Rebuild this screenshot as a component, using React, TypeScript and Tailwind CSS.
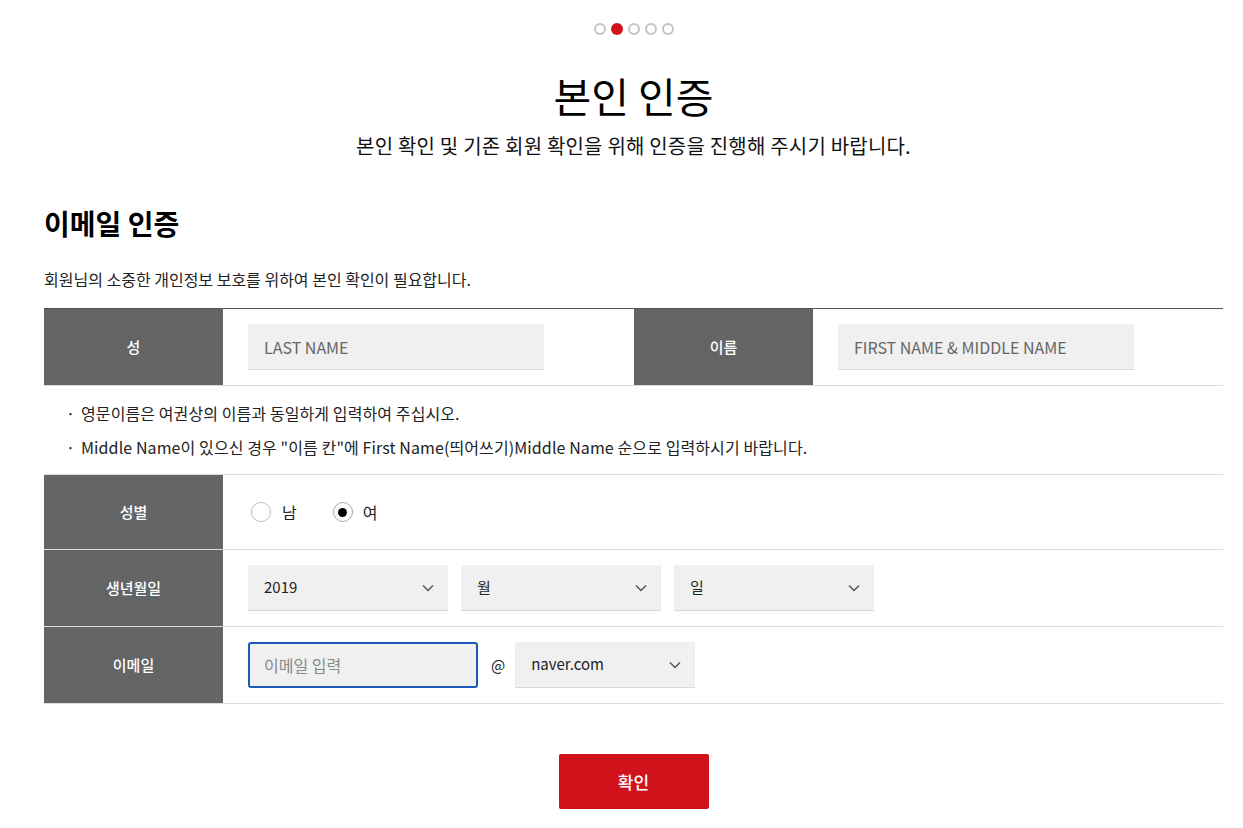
import React from "react";

const font = { fontFamily: '"Noto Sans CJK KR", "Noto Sans", sans-serif' };

function Chevron() {
  return (
    <svg width="12" height="8" viewBox="0 0 12 8" fill="none" className="shrink-0">
      <path d="M1 1.5 L6 6.5 L11 1.5" stroke="#555" strokeWidth="1.5" />
    </svg>
  );
}

function Select({ value, width }: { value: string; width: string }) {
  return (
    <div
      className={`${width} h-[46px] bg-[#f0f0f0] border-b border-[#d9d9d9] flex items-center justify-between pl-[16px] pr-[14px] text-[15px] text-[#222]`}
    >
      <span>{value}</span>
      <Chevron />
    </div>
  );
}

function Label({ children }: { children: React.ReactNode }) {
  return (
    <div className="w-[179px] shrink-0 bg-[#636466] text-white text-[15px] font-medium flex items-center justify-center">
      {children}
    </div>
  );
}

export default function App() {
  return (
    <div style={font} className="w-[1243px] min-h-[828px] bg-white pl-[44px] pr-[20px] text-[#111]">
      <div className="flex justify-center gap-[5px] pt-[23px]">
        <span className="w-[12px] h-[12px] rounded-full border-2 border-[#c4c4c4]" />
        <span className="w-[12px] h-[12px] rounded-full bg-[#d0121b]" />
        <span className="w-[12px] h-[12px] rounded-full border-2 border-[#c4c4c4]" />
        <span className="w-[12px] h-[12px] rounded-full border-2 border-[#c4c4c4]" />
        <span className="w-[12px] h-[12px] rounded-full border-2 border-[#c4c4c4]" />
      </div>
      <h1 className="mt-[35px] text-center text-[41px] leading-[50px] text-black">본인 인증</h1>
      <p className="mt-[12px] text-center text-[20px] leading-[28px] text-[#111] tracking-[0.2px]">
        본인 확인 및 기존 회원 확인을 위해 인증을 진행해 주시기 바랍니다.
      </p>
      <h2 className="mt-[45px] text-[28px] leading-[36px] font-bold text-black">이메일 인증</h2>
      <p className="mt-[27px] text-[16px] leading-[22px] text-[#222]">
        회원님의 소중한 개인정보 보호를 위하여 본인 확인이 필요합니다.
      </p>

      <div className="mt-[18px] border-t border-[#555]">
        {/* name row */}
        <div className="flex h-[77px] border-b border-[#dcdcdc]">
          <Label>성</Label>
          <div className="w-[411px] shrink-0 flex items-center pl-[25px]">
            <div className="w-[296px] h-[46px] bg-[#f0f0f0] border-b border-[#d9d9d9] flex items-center pl-[16px] text-[16px] text-[#666]">
              LAST NAME
            </div>
          </div>
          <Label>이름</Label>
          <div className="flex-1 flex items-center pl-[25px]">
            <div className="w-[296px] h-[46px] bg-[#f0f0f0] border-b border-[#d9d9d9] flex items-center pl-[16px] text-[16px] text-[#666]">
              FIRST NAME &amp; MIDDLE NAME
            </div>
          </div>
        </div>

        {/* notes */}
        <div className="h-[89px] border-b border-[#dcdcdc] pl-[22px] pt-[16px] flex flex-col gap-[12px] text-[16px] leading-[22px] text-[#222] tracking-[0.1px]">
          <div className="flex">
            <span className="w-[15px]">·</span>
            <span>영문이름은 여권상의 이름과 동일하게 입력하여 주십시오.</span>
          </div>
          <div className="flex">
            <span className="w-[15px]">·</span>
            <span>Middle Name이 있으신 경우 "이름 칸"에 First Name(띄어쓰기)Middle Name 순으로 입력하시기 바랍니다.</span>
          </div>
        </div>

        {/* gender */}
        <div className="flex h-[75px] border-b border-[#dcdcdc]">
          <Label>성별</Label>
          <div className="flex-1 flex items-center pl-[28px] text-[16px] text-[#222]">
            <span className="w-[20px] h-[20px] rounded-full border border-[#bdbdbd] bg-white" />
            <span className="ml-[11px]">남</span>
            <span className="ml-[36px] w-[20px] h-[20px] rounded-full border border-[#a8a8a8] bg-white flex items-center justify-center">
              <span className="w-[9px] h-[9px] rounded-full bg-black" />
            </span>
            <span className="ml-[10px]">여</span>
          </div>
        </div>

        {/* birth */}
        <div className="flex h-[77px] border-b border-[#dcdcdc]">
          <Label>생년월일</Label>
          <div className="flex-1 flex items-center pl-[25px] gap-[13px]">
            <Select value="2019" width="w-[200px]" />
            <Select value="월" width="w-[200px]" />
            <Select value="일" width="w-[200px]" />
          </div>
        </div>

        {/* email */}
        <div className="flex h-[77px] border-b border-[#dcdcdc]">
          <Label>이메일</Label>
          <div className="flex-1 flex items-center pl-[25px]">
            <div className="w-[230px] h-[46px] bg-[#f0f0f0] border-2 border-[#1a5bb8] rounded-[3px] flex items-center pl-[14px] text-[16px] text-[#888]">
              이메일 입력
            </div>
            <span className="ml-[13px] mr-[10px] text-[15px] text-[#222]">@</span>
            <Select value="naver.com" width="w-[180px]" />
          </div>
        </div>
      </div>

      <div className="flex justify-center mt-[50px]">
        <button className="w-[150px] h-[55px] bg-[#d0121b] rounded-[2px] text-white text-[17px] font-medium">
          확인
        </button>
      </div>
    </div>
  );
}
